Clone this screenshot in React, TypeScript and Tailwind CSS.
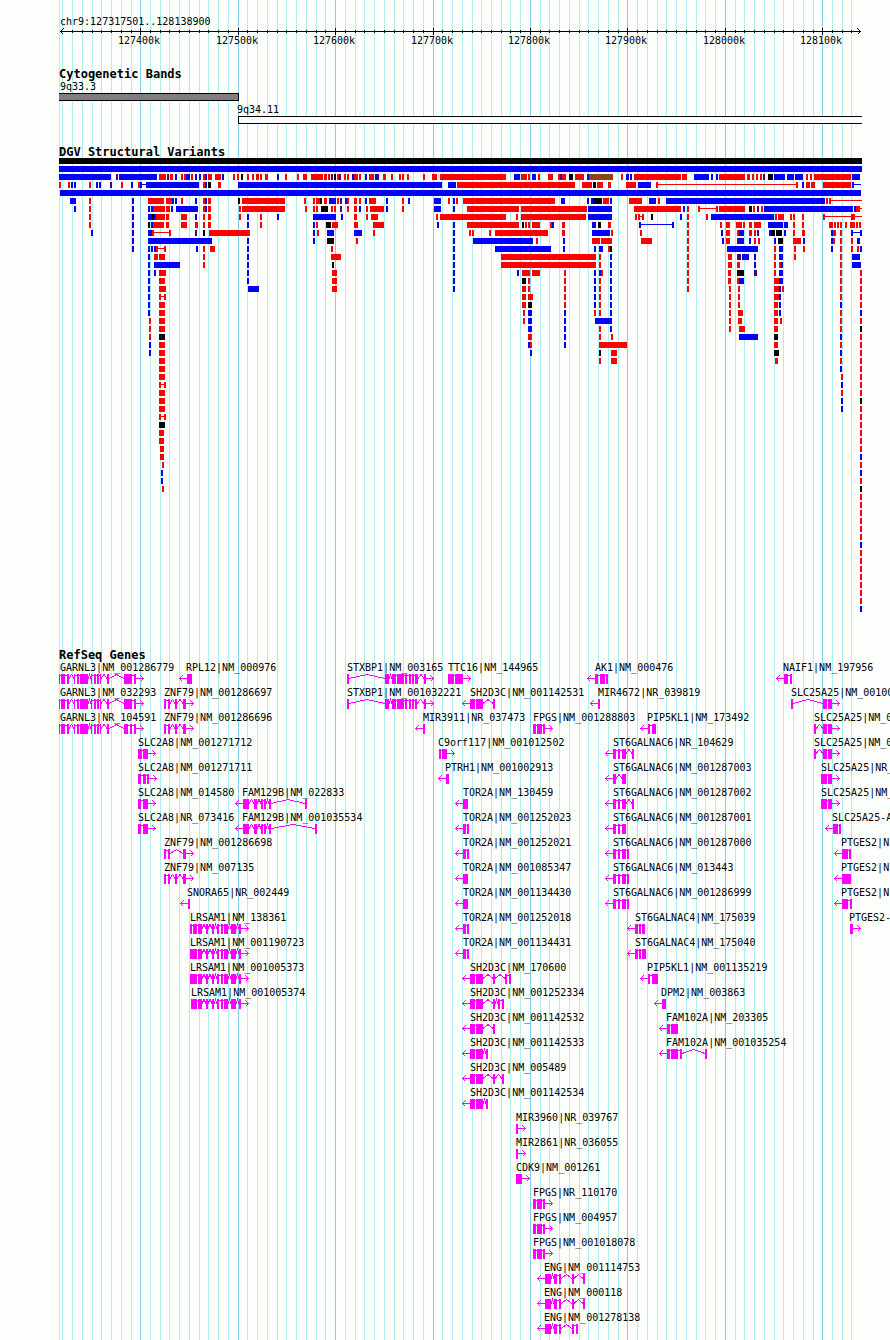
import React from 'react';

const LEFT = 59;
const RIGHT = 862;
const FIRST_MAJOR = 140.25;
const MINOR_STEP = 9.743;

const gridTicks = Array.from({ length: 82 }, (_, i) => i - 8)
  .map((k) => ({ x: Math.round(FIRST_MAJOR + k * MINOR_STEP), major: k % 10 === 0, k }))
  .filter((t) => t.x < RIGHT - 5);

const FILLS: Record<string, string> = {
  r: '#ff0000',
  b: '#0000ff',
  k: '#000000',
  p: '#4b0082',
  n: '#8b4513',
};

// One string per row. "r159-166" is a box; an upper-case colour is a thin connector; a lone start is two pixels wide.
const VARIANTS: string[] = [
  'k59-862',
  'b59-862',
  'b59-111 p116 b119-157 r159-166 p167 r170-173 b175 r181 r184 b186-190 r191 b195 b199 r203 b205 r208-212 r215-221 b222 r233 r237 k241 r247 r252 r256-259 r260 r265-268 b277 r285 r297 r303-307 r311-323 r324-327 r328 p331 k334 r337 p339 r344 r347 b352 r354-358 r359 b365 r369-374 b375 p377 r383-386 r391 r399 r402 r407 r423 r432-437 r440-506 b514-520 r521-527 r528 b532-536 r538 r548-553 r558 p560 r562-566 k569-573 r575-584 b587 n589-613 r621 b626-629 b630 r634-681 r682-687 b694-709 b711 b716 r719-745 r747-750 r752 r756 r760 p763 k768-773 b774-785 b787-794 b795-803 r806 r810 r814-851 b852-860',
  'r59 r68 b71 b74 r89 b96 b99 p110 r121 b131 r138 b140 B142-146 b146-199 r203 b205 k208-211 r218-221 b238-442 b448-456 r457-575 r582-592 k593-596 r597-603 r608-611 r626-636 b638-651 r656 R658-796 r796 b802 r806-810 r811-815 r823-851 b852 B854-861',
  'b60-861',
  'b70-76 r89 b132 r148-164 r166-172 b172 b175 r181 b195 r203 b205 r208-211 k238 r242-285 r304 r313 r316-320 k320 r324-327 b329-336 r337 p340 b345 r347 r354-357 r359 b365 r369-376 b386 r402 b408 b434-441 r448 b453 r456 r463-555 b561-565 b587 b591 k593-602 r603-609 b610 r629-642 b649-656 r658 b666-825 r826 r829 R831-862',
  'b74 r89 b132 b148 b151 r153-165 r166-170 b171 b176-198 r203 b205 r208-211 r239 r242-285 r305 r313 r316 k321-328 r331 r334 p340 r347 r354-357 b359 r366 r370-384 b386 r402 b434-441 b453 r467-519 r521-587 b588-612 r634-681 b683 r687 r698 R700-716 r716 r719-745 k749-752 r753 p757 r761 b764-853 b854 r856-860 R860-862',
  'r89 b132 b148-152 k152 b154 r156-165 r166-169 r181-187 b195 r203 r208-211 r239 b247 r260 b277 b313-336 b341 r354-357 r366 r371-378 r436 r440-506 r516 r521-586 b588-612 r635 r638 R640-642 r642 k651 b680 r687 r706 b711-774 r775 r778-784 r790 r793 r802 r823 R825-862 r851-855',
  'r89 b132 k148 b151 r153-164 r166-169 r181-187 r195-198 r203 r208-211 b247 r260 b313 r316 k326-331 r332-338 r354-358 r373-384 b437 b453 r467-519 k522 r525 r528 r532-540 r550 b552 r562-565 b592-596 k598-601 r608-611 b639 B641-672 b672 r687 r720 r726-730 r736-742 r743 r749-752 r754-761 b768-783 b784-788 r793 r802 r829-833 r834 r837 r840 r845 r850-855 r856 r859',
  'b91 b132 b148-152 r152 R154-169 r169 p195 k203 r209-250 b313 r317 b327-334 b354-362 r373 b453 r469 r472 r489 r495-548 r562-565 b592-610 r611 r640 r687 b721 r726-730 r737 b739-744 r749-752 r754 p757 b769 k771-775 k776-782 b784 r793 r802-805 b831 r833-836 r840 b851 B853-860 b860',
  'b132 b148-212 b247 b313 k327-334 r356 b453 b473-533 r536 b563 r592-600 r601-612 r641-652 r687 b722 r726-730 p737 b739-744 b749 r754 r758 b774 k778-783 r793-801 b803 b831 r833 r840 r851 b857-860',
  'b132 b148 b151 b154 r156 R158-164 r164 b196 r203 r210-215 b247 r331 b453 b495-551 b563 b594 b599-603 r608 k610 r687 b727-758 r774 b779-783 r794 r803 b831 r840 r851 r857 b860',
  'b148 r154-158 r159-165 r203 b247 r331-341 b453 r501-596 r599 b610 r687 r728-732 p737-741 b742-749 b754 r774 b779-783 r794 r840 b852-860',
  'b148 b154-180 r203 b247 k332 b453 r501-596 r599 b610 r687 r728-732 r737-740 b754 r774 r779 b781 r840 b852-861',
  'b148 b154 r159-166 b247 r332-337 b453 b517 r522-530 r532-540 r564 b594 b599 r601 b610 r687 r728-731 k737-744 p754-757 r774 b779-783 r840 r860',
  'b148 r159-165 b247 r332-337 b453 k522-526 r528 r564 b594 r599 b610 r687 r728-731 r737 b739-744 r774-779 b779-783 r840 r860',
  'b148 r159-166 b248-259 r332-337 b453 r522-526 r528 r564 b594 r599 b610 r687 r729 r738 r774-779 b779 r782 r840 r860',
  'b148 r159 R161-164 r164 r522-526 r528-533 r564 b594 r599 b610 r729 r738 r774-779 b779 r840 r860',
  'b148 r159-165 r522-526 k528-532 r564 b594 r599 b610 r729 r738 r774-778 b779 b840 r860',
  'b148 r159-165 r523 b528-532 b564 r594 r599 b610 r729 r738-743 r774-778 b779 r840 b860',
  'r149 r159-165 r523 b528-532 b564 b595-612 r729 r738-742 r774-778 r780 r840 r860',
  'r149 r159-165 b528-532 b564 r599 b610 r729 r739-745 r774-778 r840 k860',
  'r149 k159-165 r528-532 b564 r599 r611 b739-758 k774-778 b840 r860',
  'b149 r159-165 b528 r530 b564 r599-627 r774-778 r840 r860',
  'b149 r159-165 b530 k599 r611-617 k774-779 b840 r860',
  'r159-165 r599 r611-617 r775-778 r840 r860',
  'r159-165 b840 r860',
  'r159-165 r841 r860',
  'r159 R161-164 r164 b841 r860',
  'r159-165 r841 r860',
  'r159-165 b841 k860',
  'r159-165 b841 r860',
  'r159 R161-164 r164 r860',
  'k159-165 r860',
  'r159-164 r860',
  'r159-164 r860',
  'r160-164 r860',
  'r160-164 b860',
  'r162 r860',
  'b161 b860',
  'b161 r860',
  'r162 k860',
  'r860',
  'r860',
  'r860',
  'r860',
  'r860',
  'r860',
  'b860',
  'r860',
  'r860',
  'r860',
  'r860',
  'r860',
  'r860',
  'r860',
  'b860',
];

type Gene = [row: number, x: number, label: string, dir: '<' | '>', exons: string];

const GARNL3 = '59-60 61-65 67-69 74-75 77-79 80-88 91-92 94-96 97-99 100-101 107-109 124-132 134-136';
const STXBP1 = '347-349 385-389 392-396 397-404 405-407 409-411 412-414 415-418 424-426';
const ZNF79 = '164-166 168-170 175-177 183-186';
const FAM129B = '243-249 254-257 261-263 264-266 269-271';
const LRSAM1_TAIL = '198-202 206-208 212-214 217-219 221-223 224-228 231-236 239-241';
const SH2D3C = '470-475 476-483';
const FPGS = '533-536 537-542 543-545';
const ENG = '545-551 554-557 559-561 572-574';
const ST6 = '613-616 618-620 622-626';

const GENES: Gene[] = [
  [0, 60, 'GARNL3|NM_001286779', '>', GARNL3],
  [1, 60, 'GARNL3|NM_032293', '>', GARNL3],
  [2, 60, 'GARNL3|NR_104591', '>', GARNL3.replace('124-132', '124-128 130-132')],
  [0, 186, 'RPL12|NM_000976', '<', '187-192'],
  [1, 164, 'ZNF79|NM_001286697', '>', ZNF79],
  [2, 164, 'ZNF79|NM_001286696', '>', ZNF79],
  [3, 138, 'SLC2A8|NM_001271712', '>', '138-142 143-148'],
  [4, 138, 'SLC2A8|NM_001271711', '>', '138-141 143-146 147-149'],
  [5, 138, 'SLC2A8|NM_014580', '>', '138-141 143-148'],
  [6, 138, 'SLC2A8|NR_073416', '>', '138-141 143-148'],
  [5, 242, 'FAM129B|NM_022833', '<', FAM129B + ' 305-307'],
  [6, 242, 'FAM129B|NM_001035534', '<', FAM129B + ' 315-317'],
  [7, 164, 'ZNF79|NM_001286698', '>', '164-166 168-170 183-186'],
  [8, 164, 'ZNF79|NM_007135', '>', ZNF79],
  [9, 187, 'SNORA65|NR_002449', '<', '188-190'],
  [10, 190, 'LRSAM1|NM_138361', '>', '190-192 193-197 ' + LRSAM1_TAIL],
  [11, 190, 'LRSAM1|NM_001190723', '>', '190-197 ' + LRSAM1_TAIL],
  [12, 190, 'LRSAM1|NM_001005373', '>', '190-197 ' + LRSAM1_TAIL],
  [13, 191, 'LRSAM1|NM_001005374', '>', '191-197 ' + LRSAM1_TAIL],
  [0, 347, 'STXBP1|NM_003165', '>', STXBP1],
  [1, 347, 'STXBP1|NM_001032221', '>', STXBP1.replace('415-418', '415-417')],
  [0, 448, 'TTC16|NM_144965', '>', '448-454 455-463'],
  [1, 470, 'SH2D3C|NM_001142531', '<', SH2D3C + ' 493-495'],
  [2, 423, 'MIR3911|NR_037473', '<', '423-425'],
  [2, 533, 'FPGS|NM_001288803', '>', FPGS],
  [3, 438, 'C9orf117|NM_001012502', '>', '439-441 442-447'],
  [4, 445, 'PTRH1|NM_001002913', '<', '446-449'],
  [5, 463, 'TOR2A|NM_130459', '<', '463-468'],
  [6, 463, 'TOR2A|NM_001252023', '<', '463-466 467-469'],
  [7, 463, 'TOR2A|NM_001252021', '<', '463-466 467-469'],
  [8, 463, 'TOR2A|NM_001085347', '<', '463-468'],
  [9, 463, 'TOR2A|NM_001134430', '<', '463-468'],
  [10, 463, 'TOR2A|NM_001252018', '<', '463-466 467-469'],
  [11, 463, 'TOR2A|NM_001134431', '<', '463-466 467-469'],
  [12, 470, 'SH2D3C|NM_170600', '<', SH2D3C + ' 493-495 505-507 509-511'],
  [13, 470, 'SH2D3C|NM_001252334', '<', SH2D3C + ' 493-495 498-500 502-504'],
  [14, 470, 'SH2D3C|NM_001142532', '<', SH2D3C + ' 493-495'],
  [15, 470, 'SH2D3C|NM_001142533', '<', SH2D3C + ' 486-488'],
  [16, 470, 'SH2D3C|NM_005489', '<', SH2D3C + ' 493-495 502-504'],
  [17, 470, 'SH2D3C|NM_001142534', '<', SH2D3C + ' 486-488'],
  [18, 516, 'MIR3960|NR_039767', '>', '516-518'],
  [19, 516, 'MIR2861|NR_036055', '>', '516-518'],
  [20, 516, 'CDK9|NM_001261', '>', '516-522'],
  [21, 533, 'FPGS|NR_110170', '>', FPGS],
  [22, 533, 'FPGS|NM_004957', '>', FPGS],
  [23, 533, 'FPGS|NM_001018078', '>', FPGS],
  [24, 544, 'ENG|NM_001114753', '<', ENG + ' 583-585'],
  [25, 544, 'ENG|NM_000118', '<', ENG + ' 583-585'],
  [26, 544, 'ENG|NM_001278138', '<', ENG + ' 576-578'],
  [0, 595, 'AK1|NM_000476', '<', '595-598 600-605 606-608'],
  [1, 598, 'MIR4672|NR_039819', '<', '598-600'],
  [2, 647, 'PIP5KL1|NM_173492', '<', '648-650 652-656'],
  [3, 613, 'ST6GALNAC6|NR_104629', '<', ST6 + ' 632-634'],
  [4, 613, 'ST6GALNAC6|NM_001287003', '<', '613-616 622-626'],
  [5, 613, 'ST6GALNAC6|NM_001287002', '<', ST6 + ' 632-634'],
  [6, 613, 'ST6GALNAC6|NM_001287001', '<', ST6],
  [7, 613, 'ST6GALNAC6|NM_001287000', '<', ST6 + ' 627-629'],
  [8, 613, 'ST6GALNAC6|NM_013443', '<', ST6 + ' 627-629'],
  [9, 613, 'ST6GALNAC6|NM_001286999', '<', ST6 + ' 627-629'],
  [10, 635, 'ST6GALNAC4|NM_175039', '<', '635-638 639-641 642-645'],
  [11, 635, 'ST6GALNAC4|NM_175040', '<', '635-638 639-641 642-646'],
  [12, 647, 'PIP5KL1|NM_001135219', '<', '648-650 652-658'],
  [13, 661, 'DPM2|NM_003863', '<', '662-666'],
  [14, 666, 'FAM102A|NM_203305', '<', '667-670 671-678'],
  [15, 666, 'FAM102A|NM_001035254', '<', '667-670 671-678 680-682 705-707'],
  [0, 783, 'NAIF1|NM_197956', '<', '784-788 790-792'],
  [1, 791, 'SLC25A25|NM_0010', '>', '791-793 823-827 828-832'],
  [2, 814, 'SLC25A25|NM_', '>', '814-816 823-827 828-832'],
  [3, 814, 'SLC25A25|NM_', '>', '814-816 823-827 828-832'],
  [4, 821, 'SLC25A25|NR_', '>', '821-827 828-832'],
  [5, 821, 'SLC25A25|NM_', '>', '821-827 828-832'],
  [6, 832, 'SLC25A25-A', '<', '833-838 839-841'],
  [7, 841, 'PTGES2|N', '<', '842-848 849-851'],
  [8, 841, 'PTGES2|N', '<', '842-851'],
  [9, 841, 'PTGES2|N', '<', '842-848 850-852'],
  [10, 849, 'PTGES2-', '>', '850-853'],
].map((gene) => {
  const [row, x, label, dir, exons] = gene as Gene;
  const full = label === 'SLC25A25|NM_0010' || (label === 'SLC25A25|NM_' && x === 814) ? label + '0' : label;
  return [row, x, full, dir, exons] as Gene;
});

function parseRange(text: string): [number, number] {
  const [start, end] = text.split('-').map(Number);
  return [start, end || start + 2];
}

function GridLines() {
  return (
    <svg className="absolute inset-0 h-full w-full" shapeRendering="crispEdges" aria-hidden="true">
      <rect x={LEFT} y="0" width="1" height="100%" fill="#afeeee" />
      {gridTicks.map((t) => (
        <rect key={t.k} x={t.x} y="0" width="1" height="100%" fill={t.major ? '#87ceeb' : '#afeeee'} />
      ))}
    </svg>
  );
}

function Ruler() {
  return (
    <svg className="block h-[68px] w-full" shapeRendering="crispEdges">
      <text x="60" y="25">chr9:127317501..128138900</text>
      <rect x="60" y="31" width="801" height="1" />
      <path d="M63.5 28.5 L60.5 31.5 L63.5 34.5 M857.5 28.5 L860.5 31.5 L857.5 34.5" fill="none" stroke="#000" />
      {gridTicks.slice(1).map((t) => (
        <rect key={t.k} x={t.x} y={t.major ? 28 : 30} width="1" height={t.major ? 7 : 3} />
      ))}
      {gridTicks
        .filter((t) => t.major)
        .map((t) => (
          <text key={t.k} x={t.x - 1} y="44" textAnchor="middle">
            {127400 + t.k * 10}k
          </text>
        ))}
    </svg>
  );
}

function Bands() {
  return (
    <svg className="block h-[66px] w-full" shapeRendering="crispEdges">
      <text x="60" y="10">9q33.3</text>
      <rect x="59" y="13" width="180" height="8" />
      <rect x="59" y="14" width="179" height="6" fill="#827d82" />
      <text x="237" y="33">9q34.11</text>
      <rect x="238" y="36" width="624" height="8" />
      <rect x="239" y="37" width="623" height="6" fill="#fff" />
    </svg>
  );
}

function Variants() {
  return (
    <svg className="block h-[491px] w-full" shapeRendering="crispEdges">
      {VARIANTS.map((row, i) =>
        row.split(' ').map((item) => {
          const code = item[0];
          const thin = code !== code.toLowerCase();
          const [start, end] = parseRange(item.slice(1));
          return (
            <rect
              key={i + item}
              x={start}
              y={i * 8 + (thin ? 2 : 0)}
              width={end - start}
              height={thin ? 1 : 6}
              fill={FILLS[code.toLowerCase()]}
            />
          );
        }),
      )}
    </svg>
  );
}

function GeneGlyph({ gene }: { gene: Gene }) {
  const [row, x, label, dir, exonText] = gene;
  const top = row * 25 + 13;
  const mid = top + 4.5;
  const exons = exonText.split(' ').map(parseRange);
  const introns = exons.slice(1).map((e, i) => {
    const from = exons[i][1];
    const to = e[0];
    if (to - from <= 2) return `M${from} ${top + 1.5} H${to}`;
    return `M${from} ${mid} L${(from + to) / 2} ${top + 0.5} L${to} ${mid}`;
  });
  const edge = dir === '>' ? exons[exons.length - 1][1] : exons[0][0];
  const sign = dir === '>' ? 1 : -1;
  const tip = edge + sign * 7.5;
  const neck = tip - sign * 3;
  return (
    <g>
      <text x={x} y={top - 3}>{label}</text>
      <path
        d={`${introns.join(' ')} M${edge} ${mid} H${tip} M${neck} ${mid - 3} L${tip} ${mid} L${neck} ${mid + 3}`}
        fill="none"
        stroke="#ff00ff"
      />
      {exons.map(([a, b]) => (
        <rect key={a} x={a} y={top} width={b - a} height="10" fill="#ff00ff" />
      ))}
    </g>
  );
}

function Genes() {
  return (
    <svg className="block h-[679px] w-full" shapeRendering="crispEdges">
      {GENES.map((gene) => (
        <GeneGlyph key={gene[0] + '-' + gene[1]} gene={gene} />
      ))}
    </svg>
  );
}

function Track({ title, children }: { title: string; children: React.ReactNode }) {
  return (
    <section>
      <h2 className="pl-[59px] text-xs leading-3 font-bold">{title}</h2>
      {children}
    </section>
  );
}

export default function App() {
  return (
    <div className="relative min-h-screen overflow-hidden bg-[#fdfffc] font-['DejaVu_Sans_Mono','Liberation_Mono',monospace] text-[10px] text-black">
      <GridLines />
      <main className="relative">
        <Ruler />
        <Track title="Cytogenetic Bands">
          <Bands />
        </Track>
        <Track title="DGV Structural Variants">
          <Variants />
        </Track>
        <Track title="RefSeq Genes">
          <Genes />
        </Track>
      </main>
    </div>
  );
}
